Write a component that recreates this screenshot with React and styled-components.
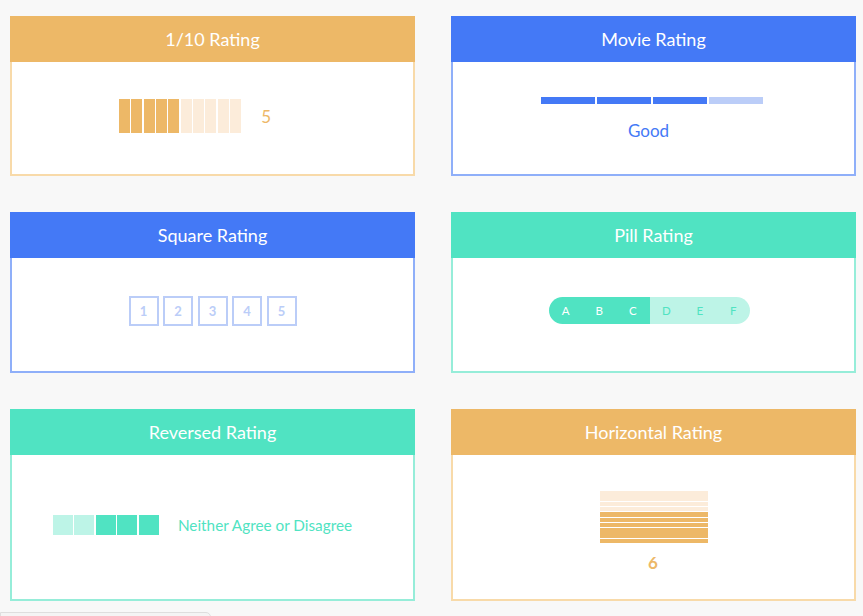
import React from "react";
import styled, { createGlobalStyle } from "styled-components";

const C = {
  orange: "#EDB867",
  orangeLight: "#FCECDA",
  orangeBorder: "#F8DAA9",
  blue: "#4479F6",
  blueLight: "#BBCDF8",
  blueBorder: "#8FAFF9",
  teal: "#50E3C2",
  tealLight: "#BDF4E7",
  tealBorder: "#96EDD9",
};

const Global = createGlobalStyle`
  html, body { margin: 0; padding: 0; background: #F8F8F8; }
  body { font-family: Lato, "Open Sans", "Liberation Sans", sans-serif; overflow: hidden; }
  * { box-sizing: border-box; }
`;

const Page = styled.div`
  width: 863px;
  height: 616px;
  overflow: hidden;
`;

const Grid = styled.div`
  display: grid;
  grid-template-columns: 405px 405px;
  column-gap: 36px;
  row-gap: 36px;
  margin: 16px 0 0 10px;
`;

const Card = styled.div`
  display: flex;
  flex-direction: column;
  background: #fff;
`;

const Header = styled.div`
  height: 46px;
  background: ${(p) => p.$color};
  color: #fff;
  font-size: 18px;
  display: flex;
  align-items: center;
  justify-content: center;
`;

const Body = styled.div`
  height: ${(p) => p.$h}px;
  border: 2px solid ${(p) => p.$border};
  border-top: none;
  display: flex;
  flex-direction: column;
  align-items: center;
  justify-content: center;
  padding-top: ${(p) => p.$pt || 0}px;
  padding-bottom: ${(p) => p.$pb || 0}px;
`;

const Row = styled.div`
  display: flex;
  align-items: center;
`;

/* 1/10 */
const TenBar = styled.div`
  width: 11px;
  height: 34px;
  margin-right: ${(p) => (p.$last ? 0 : 1.4)}px;
  background: ${(p) => (p.$on ? C.orange : C.orangeLight)};
`;
const TenNumber = styled.div`
  margin-left: 20px;
  min-width: 45px;
  font-size: 17px;
  color: ${C.orange};
`;

/* Movie */
const MovieBars = styled(Row)`
  margin-left: -4px;
`;
const MovieBar = styled.div`
  width: 54px;
  height: 7px;
  margin-right: ${(p) => (p.$last ? 0 : 2)}px;
  background: ${(p) => (p.$on ? C.blue : C.blueLight)};
`;
const MovieLabel = styled.div`
  margin-top: 16px;
  font-size: 17px;
  color: ${C.blue};
  margin-left: -10px;
`;

/* Square */
const SquareBox = styled.div`
  width: 30px;
  height: 30px;
  border: 2px solid ${C.blueLight};
  margin-right: ${(p) => (p.$last ? 0 : 4.5)}px;
  color: ${C.blueLight};
  font-size: 13px;
  font-weight: 700;
  display: flex;
  align-items: center;
  justify-content: center;
`;

/* Pill */
const Pill = styled.div`
  display: flex;
  height: 27px;
  border-radius: 14px;
  overflow: hidden;
  margin-left: -8px;
`;
const PillItem = styled.div`
  width: 33.5px;
  display: flex;
  align-items: center;
  justify-content: center;
  font-size: 11.5px;
  background: ${(p) => (p.$on ? C.teal : C.tealLight)};
  color: ${(p) => (p.$on ? "#fff" : C.teal)};
`;

/* Reversed */
const RevBar = styled.div`
  width: 20px;
  height: 20px;
  margin-right: ${(p) => (p.$last ? 0 : 1.5)}px;
  background: ${(p) => (p.$on ? C.teal : C.tealLight)};
`;
const RevLabel = styled.div`
  margin: 0 20px 0 19px;
  font-size: 15.3px;
  color: ${C.teal};
`;

/* Horizontal */
const HStack = styled.div`
  display: flex;
  flex-direction: column;
  width: 108px;
`;
const HBar = styled.div`
  height: 4.4px;
  margin-bottom: ${(p) => (p.$last ? 0 : 0.9)}px;
  background: ${(p) => (p.$on ? C.orange : C.orangeLight)};
`;
const HNumber = styled.div`
  margin-top: 11px;
  font-size: 17px;
  font-weight: 700;
  line-height: 1.1;
  color: ${C.orange};
  margin-left: -1px;
`;

const Foot = styled.div`
  margin-top: 11px;
  width: 211px;
  height: 20px;
  border: 1px solid #DEDEDE;
  border-radius: 0 5px 0 0;
  background: #F4F4F4;
`;

const range = (n) => Array.from({ length: n }, (_, i) => i);

export default function App() {
  return (
    <Page>
      <Global />
      <Grid>
        <Card>
          <Header $color={C.orange}>1/10 Rating</Header>
          <Body $h={114} $border={C.orangeBorder} $pb={4}>
            <Row>
              <Row>
                {range(10).map((i) => (
                  <TenBar key={i} $on={i < 5} $last={i === 9} />
                ))}
              </Row>
              <TenNumber>5</TenNumber>
            </Row>
          </Body>
        </Card>

        <Card>
          <Header $color={C.blue}>Movie Rating</Header>
          <Body $h={114} $border={C.blueBorder} $pt={2}>
            <MovieBars>
              {range(4).map((i) => (
                <MovieBar key={i} $on={i < 3} $last={i === 3} />
              ))}
            </MovieBars>
            <MovieLabel>Good</MovieLabel>
          </Body>
        </Card>

        <Card>
          <Header $color={C.blue}>Square Rating</Header>
          <Body $h={115} $border={C.blueBorder} $pb={8}>
            <Row>
              {range(5).map((i) => (
                <SquareBox key={i} $last={i === 4}>
                  {i + 1}
                </SquareBox>
              ))}
            </Row>
          </Body>
        </Card>

        <Card>
          <Header $color={C.teal}>Pill Rating</Header>
          <Body $h={115} $border={C.tealBorder} $pb={8}>
            <Pill>
              {["A", "B", "C", "D", "E", "F"].map((l, i) => (
                <PillItem key={l} $on={i < 3}>
                  {l}
                </PillItem>
              ))}
            </Pill>
          </Body>
        </Card>

        <Card>
          <Header $color={C.teal}>Reversed Rating</Header>
          <Body $h={146} $border={C.tealBorder} $pb={4}>
            <Row>
              <Row>
                {range(5).map((i) => (
                  <RevBar key={i} $on={i >= 2} $last={i === 4} />
                ))}
              </Row>
              <RevLabel>Neither Agree or Disagree</RevLabel>
            </Row>
          </Body>
        </Card>

        <Card>
          <Header $color={C.orange}>Horizontal Rating</Header>
          <Body $h={146} $border={C.orangeBorder} $pt={10}>
            <HStack>
              {range(10).map((i) => (
                <HBar key={i} $on={i >= 4} $last={i === 9} />
              ))}
            </HStack>
            <HNumber>6</HNumber>
          </Body>
        </Card>
      </Grid>
      <Foot />
    </Page>
  );
}
